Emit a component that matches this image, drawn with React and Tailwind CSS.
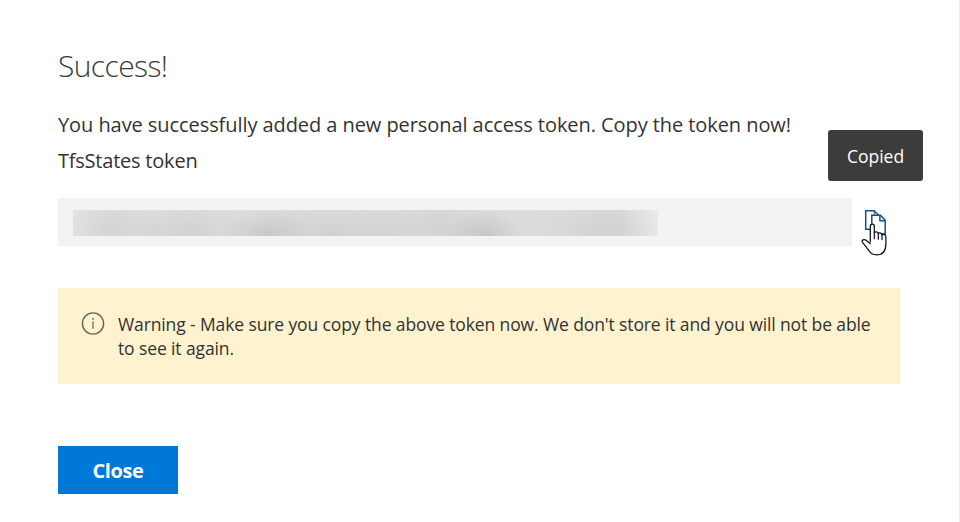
function CopyIcon() {
  return (
    <svg width="24" height="28" viewBox="0 0 24 28" fill="none" stroke="#0b558e" strokeWidth="1.5" className="block">
      <path d="M6 19.2H1.7V.8h8.5l4.4 4.4" />
      <path d="M10.2.8v4.4" strokeWidth="1" />
      <path d="M7.8 5.3h8.6l4.8 4.9v13.9H7.8z" fill="#fff" />
      <path d="M15.9 5.3v5.4h5.3" />
    </svg>
  );
}

function HandCursor() {
  return (
    <svg width="27" height="34" viewBox="0 0 27 34" className="absolute left-[-3px] top-[13px]">
      <path
        d="M9.3 18.8V3.2C9.3 .3 13.3 .3 13.3 3.2V9.6C14.2 8.5 17 8.7 17.3 10.4C18.5 9.5 20.8 10 21 11.6C22.5 10.9 24.9 11.7 24.9 14V20.2C24.9 27.5 22 31.8 16 31.8C10.2 31.8 8.7 29 6.2 25.3L1.5 19.4C.1 17.3 3.1 15.6 5.1 17.2L9.3 20.7"
        fill="#fff"
        stroke="#101024"
        strokeWidth="1.25"
        strokeLinejoin="round"
        strokeLinecap="round"
      />
      <path d="M13.3 9.5v6.2M17.3 10.2v6M21 11.4v5.2" stroke="#101024" strokeWidth="1.2" strokeLinecap="round" />
    </svg>
  );
}

function InfoIcon() {
  return (
    <svg width="24" height="24" viewBox="0 0 24 24" fill="none" stroke="#66645c" className="block shrink-0">
      <circle cx="12" cy="11.5" r="10.6" strokeWidth="1.4" />
      <path d="M12 9.5v7.3" strokeWidth="1.3" />
      <circle cx="12" cy="6.9" r=".9" fill="#66645c" stroke="none" />
    </svg>
  );
}

export default function App() {
  return (
    <main className="h-[522px] w-[960px] overflow-hidden border-r border-[#eaeaea] bg-white pl-[58px] pt-[44px] font-['Open_Sans',sans-serif] text-[#333]">
      <h1 className="h-[44px] whitespace-nowrap text-[30px] font-light leading-[44px] tracking-[-0.6px] text-[#3a3a3a]">
        Success!
      </h1>
      <p className="mt-[19px] h-[36px] whitespace-nowrap text-[20px] leading-[36px] tracking-[-0.07px]">
        You have successfully added a new personal access token. Copy the token now!
      </p>
      <p className="h-[36px] whitespace-nowrap text-[20px] leading-[36px] tracking-[-0.22px]">TfsStates token</p>

      <div className="mt-[19px] flex h-[48px]">
        <div className="flex w-[794px] items-start bg-[#f3f3f3] pl-[15px] pt-[12px]">
          <div className="h-[26px] w-[585px] bg-[radial-gradient(ellipse_45px_26px_at_192px_24px,#00000014,#0000000a_50%,#00000000),radial-gradient(ellipse_40px_24px_at_413px_25px,#00000016,#0000000a_50%,#00000000),radial-gradient(ellipse_60px_30px_at_115px_22px,#0000000d,#00000006_50%,#00000000),radial-gradient(ellipse_60px_30px_at_38px_20px,#0000000b,#00000005_50%,#00000000),radial-gradient(ellipse_90px_32px_at_260px_24px,#0000000e,#00000007_50%,#00000000),radial-gradient(ellipse_80px_34px_at_365px_18px,#0000000b,#00000005_50%,#00000000),radial-gradient(ellipse_70px_30px_at_535px_20px,#0000000c,#00000006_50%,#00000000),linear-gradient(90deg,#e4e4e4,#dddddd_6%,#dcdcdc_94%,#ebebeb)]" />
        </div>
        <div className="relative ml-[12px] mt-[12px] h-[28px] w-[24px]">
          <CopyIcon />
          <HandCursor />
          <div className="absolute left-[-36px] top-[-80px] flex h-[51px] w-[95px] items-center justify-center rounded-[3px] bg-[#3c3c3c] pt-[2px] text-[17.5px] text-white">
            Copied
          </div>
        </div>
      </div>

      <div className="mt-[42px] flex h-[96px] w-[842px] bg-[#fff2cf] pl-[23px] pt-[24px]">
        <InfoIcon />
        <p className="ml-[13px] whitespace-nowrap text-[17.5px] leading-[24px] tracking-[-0.115px]">
          Warning - Make sure you copy the above token now. We don't store it and you will not be able
          <br />
          to see it again.
        </p>
      </div>

      <button className="mt-[62px] flex h-[48px] w-[120px] items-center justify-center bg-[#0078d7] pt-[2px] text-[20px] font-bold tracking-[-0.4px] text-white">
        Close
      </button>
    </main>
  );
}
